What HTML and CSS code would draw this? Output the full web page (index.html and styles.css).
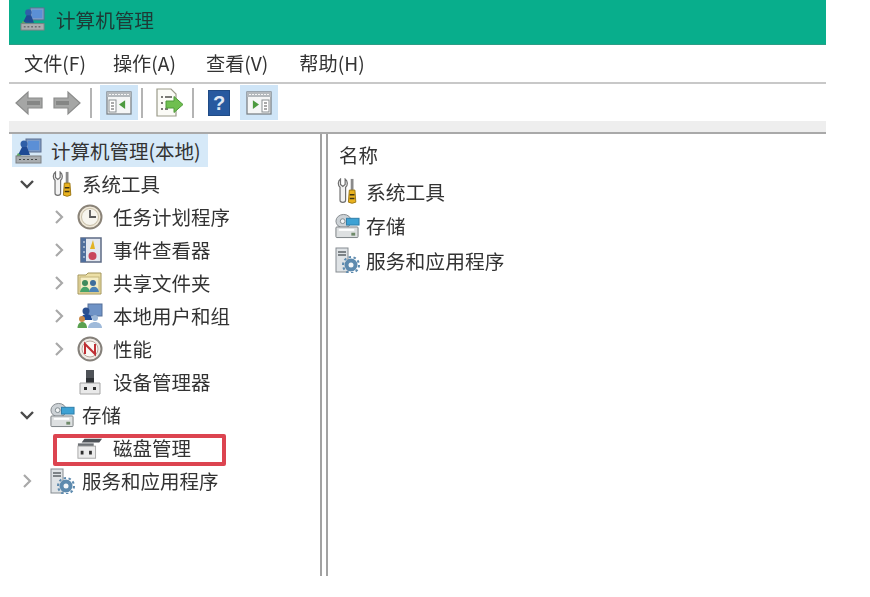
FILE: index.html
```html
<!DOCTYPE html>
<html lang="zh-CN">
<head>
<meta charset="utf-8">
<title>计算机管理</title>
<link rel="stylesheet" href="styles.css">
</head>
<body>
<svg class="defs" xmlns="http://www.w3.org/2000/svg">
  <symbol id="i-computer" viewBox="0 0 28 26">
    <rect x="11" y="1" width="15" height="13" fill="#7d9cc9" stroke="#5d6f8e"/>
    <rect x="13" y="3" width="11" height="9" fill="#5b8fd6"/>
    <circle cx="9" cy="6" r="3.500" fill="#2f5fa8"/>
    <path d="M3 17 L7 9 H12 L15 17Z" fill="#1f4a94"/>
    <path d="M3 15 L1 19 H8Z" fill="#5aa860"/>
    <rect x="1" y="18" width="25" height="7" fill="#a9adb0" stroke="#7c8082"/>
    <path d="M4 21.500h2M8 21.500h2M12 21.500h2M16 21.500h2M20 21.500h2" stroke="#44484a"/>
  </symbol>
  <symbol id="i-tools" viewBox="0 0 22 28">
    <path d="M4 1 V7 L6.500 9 L9 7 V1 C12 3 12 8 9.500 10 V24 C9.500 27 3.500 27 3.500 24 V10 C1 8 1 3 4 1Z" fill="#f2f2f2" stroke="#6f6f6f" stroke-width="1.300"/>
    <rect x="15" y="1" width="3" height="12" fill="#8a8a8a"/>
    <path d="M13.500 13 H19.500 L20.500 26 Q16.500 28.500 12.500 26Z" fill="#e9b21f" stroke="#9a7510"/>
    <path d="M14 18 H19 M14 22 H19" stroke="#3f3415" stroke-width="1.500"/>
  </symbol>
  <symbol id="i-clock" viewBox="0 0 26 26">
    <circle cx="13" cy="13" r="11.500" fill="#efe8d8" stroke="#8a8378" stroke-width="2"/>
    <circle cx="13" cy="13" r="8.500" fill="#f7f5ee" stroke="#c8bfa8"/>
    <path d="M13 6 V13 H19" fill="none" stroke="#5a5a5a" stroke-width="1.800"/>
  </symbol>
  <symbol id="i-event" viewBox="0 0 26 26">
    <rect x="4" y="1" width="20" height="24" fill="#e4e8f0" stroke="#5d6b85" stroke-width="1.500"/>
    <rect x="4" y="1" width="5" height="24" fill="#4f6e9c"/>
    <path d="M6 5h2M6 10h2M6 15h2M6 20h2" stroke="#e8edf5"/>
    <path d="M16 3 L13 12 H18Z" fill="#e2b325"/>
    <circle cx="15.500" cy="19" r="4" fill="#c9455a"/>
  </symbol>
  <symbol id="i-share" viewBox="0 0 26 26">
    <path d="M1 5 H9 L11 3 H24 V24 H1Z" fill="#ecdfa6" stroke="#a4965c"/>
    <rect x="3" y="7" width="19" height="15" fill="#f5edc4" stroke="#c4b67a"/>
    <circle cx="8" cy="13" r="3" fill="#3f8a5c"/>
    <circle cx="16" cy="13" r="3" fill="#3f6e9c"/>
    <path d="M3 22 C4 15 12 15 13 22Z" fill="#46a36a"/>
    <path d="M12 22 C13 15 21 15 22 22Z" fill="#4b83b8"/>
  </symbol>
  <symbol id="i-users" viewBox="0 0 26 26">
    <rect x="11" y="1" width="14" height="12" fill="#6f93c6" stroke="#56709a"/>
    <circle cx="9" cy="8" r="3.500" fill="#2a4f90"/>
    <path d="M4 17 C4 9 15 9 15 17Z" fill="#1f4a94"/>
    <circle cx="5" cy="16" r="3" fill="#c98a4a"/>
    <path d="M0.500 25 C0.500 17 10 17 10 25Z" fill="#5aa04f"/>
    <circle cx="18" cy="15" r="3" fill="#9bb7d8"/>
    <path d="M11 25 C11 17 25 17 25 25Z" fill="#9fbada"/>
  </symbol>
  <symbol id="i-perf" viewBox="0 0 26 26">
    <circle cx="13" cy="13" r="11.500" fill="#efeae4" stroke="#85807a" stroke-width="2"/>
    <circle cx="13" cy="13" r="8" fill="#fbf8f4" stroke="#b9a9a0"/>
    <path d="M8 18 V8 L18 18 V8" fill="none" stroke="#bf2f33" stroke-width="2"/>
  </symbol>
  <symbol id="i-device" viewBox="0 0 26 26">
    <rect x="9" y="1" width="8" height="13" fill="#4f5358"/>
    <path d="M9 9 H17 V14 H9Z" fill="#2f3236"/>
    <path d="M3 14 H23 V25 H3Z" fill="#e9e9e9" stroke="#a4a4a4"/>
    <rect x="7" y="18" width="3" height="3" fill="#303030"/>
    <rect x="16" y="18" width="3" height="3" fill="#303030"/>
  </symbol>
  <symbol id="i-storage" viewBox="0 0 27 26">
    <ellipse cx="10" cy="8" rx="8" ry="7" fill="#cdd2d6" stroke="#82888c"/>
    <circle cx="9" cy="8" r="2.500" fill="#f2f4f5" stroke="#7f8a90"/>
    <rect x="13" y="5" width="13" height="7" fill="#3ea2d4" stroke="#2e7da8"/>
    <rect x="2" y="14" width="23" height="11" rx="1" fill="#dde0e1" stroke="#7a7f82"/>
    <rect x="5" y="16" width="16" height="2" fill="#fff"/>
    <rect x="18" y="20" width="4" height="3" fill="#6f8a6a"/>
  </symbol>
  <symbol id="i-disk" viewBox="0 0 28 24">
    <path d="M5 6 L8 2 H27 L24 6Z" fill="#4f5358"/>
    <path d="M1 7 H18 V10 H1Z" fill="#6c7074"/>
    <rect x="1" y="10" width="19" height="13" fill="#ececec" stroke="#a6a6a6"/>
    <rect x="4" y="15" width="3" height="4" fill="#303030"/>
    <rect x="13" y="15" width="3" height="4" fill="#303030"/>
  </symbol>
  <symbol id="i-services" viewBox="0 0 24 26">
    <rect x="1" y="1" width="12" height="24" fill="#dfe3e6" stroke="#868c91"/>
    <path d="M3 5 H11 M3 8 H11" stroke="#5e6468" stroke-width="1.300"/>
    <circle cx="16" cy="18" r="6.500" fill="#5d8aae"/>
    <circle cx="16" cy="18" r="8" fill="none" stroke="#5d8aae" stroke-width="2" stroke-dasharray="2.500 2.500"/>
    <circle cx="16" cy="18" r="2.500" fill="#f3f6f8"/>
  </symbol>
  <symbol id="i-arrow" viewBox="0 0 28 26">
    <path d="M1 13 L13 2 V8 H27 V18 H13 V24Z" fill="#a5a6a5" stroke="#8b8c8b" stroke-width="1.200"/>
    <path d="M12 13 H25" stroke="#858685" stroke-width="4"/>
  </symbol>
  <symbol id="i-pane-left" viewBox="0 0 26 24">
    <rect x="1" y="1" width="24" height="22" fill="#f5f6f6" stroke="#7d8388" stroke-width="1.300"/>
    <rect x="1" y="1" width="24" height="5" fill="#b4b9bd"/>
    <path d="M3 3.500 H23" stroke="#f5f5f5" stroke-dasharray="2 1"/>
    <rect x="3" y="9" width="7" height="12" fill="#fff" stroke="#8a8f92"/>
    <path d="M5 12 H8 M5 15 H8 M5 18 H8" stroke="#555"/>
  </symbol>
  <symbol id="i-export" viewBox="0 0 30 30">
    <path d="M3 1 H17 L22 6 V28 H3Z" fill="#fbfbf6" stroke="#9b9b8a" stroke-width="1.200"/>
    <path d="M7 9 H9 M11 9 H18 M7 15 H9 M7 21 H9 M11 21 H14" stroke="#4f4f4a" stroke-width="1.300"/>
    <path d="M12 13 H20 V8.500 L29 16.500 L20 24.500 V20 H12Z" fill="#6fbf4f" stroke="#4f9a3a"/>
  </symbol>
  <symbol id="i-help" viewBox="0 0 22 26">
    <rect x="0.500" y="0.500" width="21" height="25" fill="#27599f" stroke="#1f4a85"/>
    <text class="help-q" x="11" y="20">?</text>
  </symbol>
</svg>

<div class="window">
  <header class="titlebar">
    <svg class="title-icon"><use href="#i-computer"/></svg>
    <span>计算机管理</span>
  </header>

  <nav class="menubar">
    <span class="menu m1">文件(F)</span>
    <span class="menu m2">操作(A)</span>
    <span class="menu m3">查看(V)</span>
    <span class="menu">帮助(H)</span>
  </nav>

  <div class="toolbar">
    <svg class="tb-arrow"><use href="#i-arrow"/></svg>
    <svg class="tb-arrow flip"><use href="#i-arrow"/></svg>
    <i class="sep s1"></i>
    <span class="tb-btn">
      <svg class="tb-pane"><use href="#i-pane-left"/></svg>
      <svg class="tb-tri" viewBox="0 0 8 10"><path d="M7 0 V10 L0 5Z" fill="#4c9a3e"/></svg>
    </span>
    <i class="sep s2"></i>
    <svg class="tb-export"><use href="#i-export"/></svg>
    <i class="sep s3"></i>
    <svg class="tb-help"><use href="#i-help"/></svg>
    <span class="tb-btn last mirrored">
      <svg class="tb-pane flip"><use href="#i-pane-left"/></svg>
      <svg class="tb-tri right" viewBox="0 0 8 10"><path d="M1 0 V10 L8 5Z" fill="#4c9a3e"/></svg>
    </span>
  </div>

  <div class="band"></div>

  <main class="panes">
    <section class="tree">
      <div class="row l0 selected">
        <svg class="ico comp"><use href="#i-computer"/></svg><span>计算机管理(本地)</span>
      </div>
      <div class="row l1">
        <svg class="chev dark" viewBox="0 0 16 10"><path d="M2 2 L8 8 L14 2"/></svg>
        <svg class="ico"><use href="#i-tools"/></svg><span>系统工具</span>
      </div>
      <div class="row l2">
        <svg class="chev" viewBox="0 0 16 16"><path d="M5 2 L11 8 L5 14"/></svg>
        <svg class="ico"><use href="#i-clock"/></svg><span>任务计划程序</span>
      </div>
      <div class="row l2">
        <svg class="chev" viewBox="0 0 16 16"><path d="M5 2 L11 8 L5 14"/></svg>
        <svg class="ico"><use href="#i-event"/></svg><span>事件查看器</span>
      </div>
      <div class="row l2">
        <svg class="chev" viewBox="0 0 16 16"><path d="M5 2 L11 8 L5 14"/></svg>
        <svg class="ico"><use href="#i-share"/></svg><span>共享文件夹</span>
      </div>
      <div class="row l2">
        <svg class="chev" viewBox="0 0 16 16"><path d="M5 2 L11 8 L5 14"/></svg>
        <svg class="ico"><use href="#i-users"/></svg><span>本地用户和组</span>
      </div>
      <div class="row l2">
        <svg class="chev" viewBox="0 0 16 16"><path d="M5 2 L11 8 L5 14"/></svg>
        <svg class="ico"><use href="#i-perf"/></svg><span>性能</span>
      </div>
      <div class="row l2">
        <span class="chev"></span>
        <svg class="ico"><use href="#i-device"/></svg><span>设备管理器</span>
      </div>
      <div class="row l1">
        <svg class="chev dark" viewBox="0 0 16 10"><path d="M2 2 L8 8 L14 2"/></svg>
        <svg class="ico"><use href="#i-storage"/></svg><span>存储</span>
      </div>
      <div class="row l2 marked">
        <span class="chev"></span>
        <svg class="ico"><use href="#i-disk"/></svg><span>磁盘管理</span>
        <i class="mark"></i>
      </div>
      <div class="row l1">
        <svg class="chev" viewBox="0 0 16 16"><path d="M5 2 L11 8 L5 14"/></svg>
        <svg class="ico"><use href="#i-services"/></svg><span>服务和应用程序</span>
      </div>
    </section>

    <section class="list">
      <div class="list-head">名称</div>
      <div class="item"><svg class="item-ico"><use href="#i-tools"/></svg><span>系统工具</span></div>
      <div class="item"><svg class="item-ico"><use href="#i-storage"/></svg><span>存储</span></div>
      <div class="item"><svg class="item-ico"><use href="#i-services"/></svg><span>服务和应用程序</span></div>
    </section>
  </main>
</div>
</body>
</html>
```

FILE: styles.css
```css
* { box-sizing: border-box; }

html, body {
  margin: 0;
  background: #fff;
}

body {
  width: 870px;
  height: 597px;
  overflow: hidden;
  font-family: "Noto Sans CJK SC", "Liberation Sans", sans-serif;
  color: #333;
}

.defs { display: none; }

.help-q {
  font: bold 20px "Liberation Sans", sans-serif;
  fill: #dfe7f3;
  text-anchor: middle;
}

.window {
  width: 817px;
  height: 576px;
  margin-left: 9px;
  display: flex;
  flex-direction: column;
  filter: blur(0.35px);
}

/* title bar */
.titlebar {
  height: 45px;
  flex: none;
  background: #08ae8c;
  border-bottom: 1px solid #2c9e86;
  display: flex;
  align-items: center;
  padding: 0 0 6px 11px;
  font-size: 19.600px;
  color: #1e3a36;
}

.title-icon {
  width: 26px;
  height: 24px;
  margin-right: 10px;
}

/* menu bar */
.menubar {
  height: 39px;
  flex: none;
  display: flex;
  align-items: center;
  padding: 0 0 1px 15px;
  font-size: 19.200px;
  border-bottom: 2px solid #c8c8c8;
}

.menu { white-space: nowrap; }
.m1 { margin-right: 27px; }
.m2 { margin-right: 30px; }
.m3 { margin-right: 31px; }

/* tool bar */
.toolbar {
  height: 37px;
  flex: none;
  display: flex;
  align-items: center;
  padding-left: 6px;
}

.tb-arrow {
  width: 28px;
  height: 26px;
  margin-right: 10px;
}

.flip { transform: scaleX(-1); }

.sep {
  width: 2px;
  height: 30px;
  background: #b4b4b4;
  flex: none;
}

.s1 { margin: 0 8px 0 -1px; }
.s2 { margin: 0 11px 0 3px; }
.s3 { margin: 0 14px 0 8px; }

.tb-btn {
  width: 38px;
  height: 35px;
  background: #cfe5f7;
  display: flex;
  align-items: center;
  justify-content: center;
  position: relative;
}

.tb-btn.last { margin-left: 10px; }

.tb-pane {
  width: 26px;
  height: 24px;
}

.tb-tri {
  position: absolute;
  left: 19px;
  top: 15px;
  width: 7px;
  height: 9px;
}

.tb-tri.right { left: 12px; }

.tb-export {
  width: 30px;
  height: 30px;
}

.tb-help {
  width: 22px;
  height: 26px;
}

.band {
  height: 11px;
  flex: none;
  background: #eeeeee;
  border-bottom: 2px solid #a9a9a9;
  box-sizing: content-box;
}

/* panes */
.panes {
  flex: 1;
  min-height: 0;
  display: flex;
}

.tree {
  width: 313px;
  flex: none;
  border-right: 2px solid #a2a2a2;
  font-size: 19.500px;
}

.row {
  height: 33px;
  display: flex;
  align-items: center;
  white-space: nowrap;
  position: relative;
}

.chev {
  width: 16px;
  height: 16px;
  flex: none;
  fill: none;
  stroke: #a9a9a9;
  stroke-width: 2.200;
}

.chev.dark {
  height: 10px;
  stroke: #4a4a4a;
  stroke-width: 2.400;
}

.ico {
  width: 26px;
  height: 26px;
  flex: none;
}

.l0 {
  padding-left: 3px;
  margin-left: 3px;
  width: 196px;
  background: #d6e9f8;
}

.l0 .ico { margin-right: 8px; width: 28px; }

.l1 { padding-left: 10px; }
.l1 .ico { margin: 0 7px 0 14px; }

.l2 { padding-left: 42px; }
.l2 .ico { margin: 0 10px; }

/* red annotation drawn over the row */
.mark {
  position: absolute;
  left: 44px;
  top: 3px;
  width: 173px;
  height: 32px;
  border: 4px solid #dc4450;
  border-radius: 2px;
}

/* list pane */
.list {
  flex: 1;
  margin-left: 4px;
  border-left: 2px solid #a2a2a2;
  padding-left: 6px;
  font-size: 19.800px;
}

.list-head {
  height: 40px;
  padding: 5px 0 0 5px;
  line-height: 31px;
  font-size: 19.500px;
}

.item {
  height: 34.500px;
  display: flex;
  align-items: center;
  white-space: nowrap;
}

.item-ico {
  width: 26px;
  height: 26px;
  margin-right: 6px;
  flex: none;
}
```
